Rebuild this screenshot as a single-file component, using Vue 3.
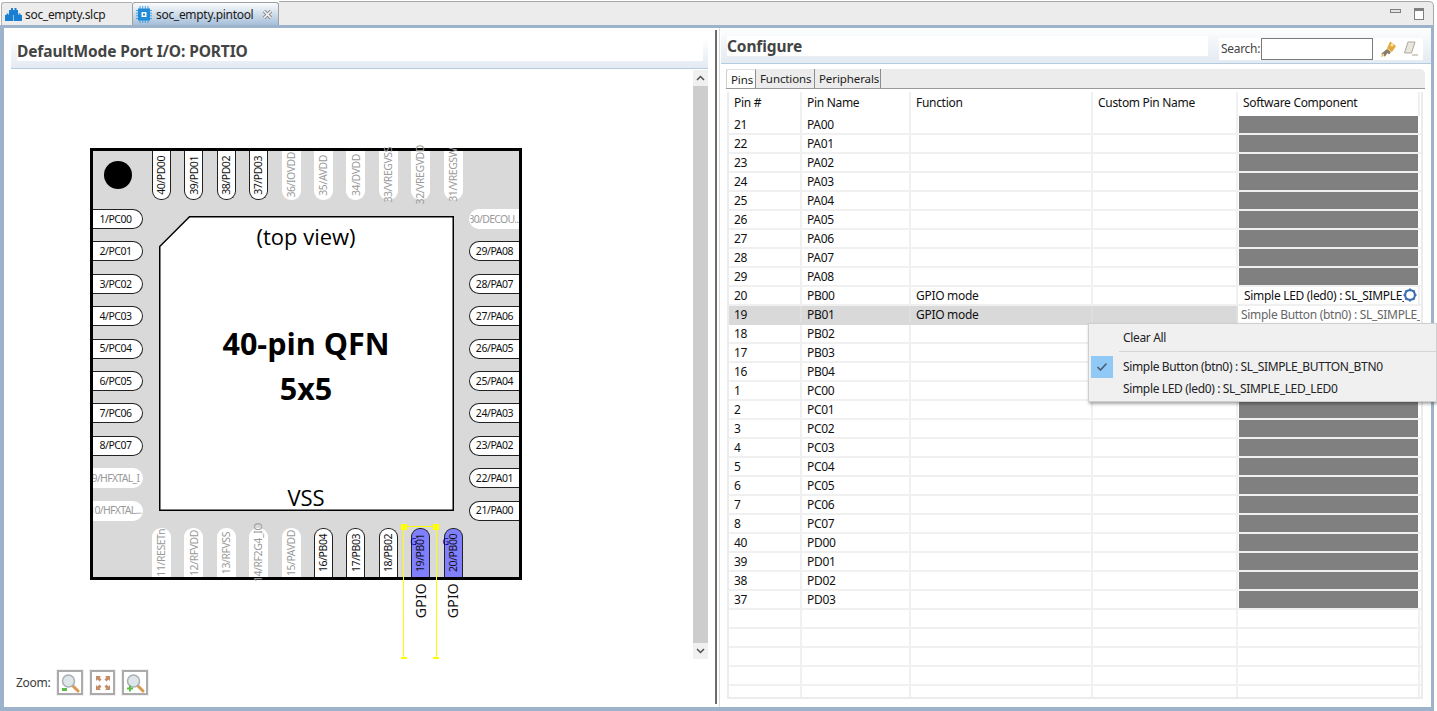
<template>
  <div class="workbench">
    <!-- editor tabs -->
    <div class="tabbar">
      <div class="tab">
        <svg class="tab-icon" width="17" height="13" viewBox="0 0 17 13">
          <path d="M4 2h9v5H4zM0 7h8.200v6H0zM8.800 7H17v6H8.800z" fill="#1a7fd0" />
          <path d="M6 0h2v2H6zM9.500 0h2v2h-2zM1.500 5.500h2V7h-2zM4.500 5.500h2V7h-2zM10.500 5.500h2V7h-2zM13.500 5.500h2V7h-2z" fill="#1a7fd0" />
        </svg>
        <span>soc_empty.slcp</span>
      </div>
      <div class="tab active">
        <svg class="tab-icon" width="16" height="17" viewBox="0 0 16 17">
          <path d="M4 0v17M6.700 0v17M9.300 0v17M12 0v17M0 4.500h16M0 7.200h16M0 9.800h16M0 12.500h16" stroke="#3fa0e6" stroke-width="1" />
          <rect x="2" y="2.500" width="12" height="12" fill="#1f8ad6" />
          <rect x="5.500" y="6" width="5" height="5" fill="#fff" />
          <rect x="7" y="7.500" width="2" height="2" fill="#1f8ad6" />
        </svg>
        <span>soc_empty.pintool</span>
        <svg class="close" width="11" height="11" viewBox="0 0 11 11">
          <path d="M2 2l7 7M9 2l-7 7" stroke="#8a8a8a" stroke-width="3.400" />
          <path d="M2 2l7 7M9 2l-7 7" stroke="#f6f6f6" stroke-width="1.600" />
        </svg>
      </div>
      <div class="tabbar-rest">
        <span class="win-min"></span>
        <span class="win-max"></span>
      </div>
    </div>

    <div class="editor">
      <!-- chip view -->
      <section class="left">
        <div class="band left-band">
          <h2>DefaultMode Port I/O: PORTIO</h2>
        </div>
        <div class="canvas-row">
          <div class="canvas">
            <div class="chip">
              <div class="pins-top">
                <span class="dot"></span>
                <div class="pin v top" v-for="p in topPins" :key="p.t" :class="{ off: p.off }"><span>{{ p.t }}</span></div>
              </div>
              <div class="chip-mid">
                <div class="pins-side">
                  <div class="pin h left-pin" v-for="p in leftPins" :key="p.t" :class="{ off: p.off }"><span>{{ p.t }}</span></div>
                </div>
                <div class="die">
                  <svg class="die-outline" width="295" height="295" viewBox="0 0 295 295">
                    <path d="M30.500 .75H294.250V294.250H.75V30.500Z" fill="#fff" stroke="#000" stroke-width="1.500" />
                  </svg>
                  <div class="die-top">(top view)</div>
                  <div class="die-name">40-pin QFN<br />5x5</div>
                  <div class="die-vss">VSS</div>
                </div>
                <div class="pins-side">
                  <div class="pin h right-pin" v-for="p in rightPins" :key="p.t" :class="{ off: p.off }"><span>{{ p.t }}</span></div>
                </div>
              </div>
              <div class="pins-bottom">
                <div class="pin v bottom" v-for="p in bottomPins" :key="p.t" :class="{ off: p.off, used: p.used }">
                  <i v-if="p.used">G</i>
                  <span>{{ p.t }}</span>
                </div>
              </div>
            </div>
            <div class="gpio-labels">
              <span>GPIO</span>
              <span>GPIO</span>
            </div>
            <svg class="marker" width="44" height="140" viewBox="0 0 44 140">
              <path d="M3 2.500H35" stroke="#ff0" stroke-width="1" fill="none" />
              <rect x="0" y="0" width="6" height="6" fill="#ff0" />
              <rect x="32" y="0" width="6" height="6" fill="#ff0" />
              <path d="M2.500 4V134M35.500 4V134" stroke="#ff0" stroke-width="1" />
              <rect x="0" y="133" width="6" height="2" fill="#ff0" />
              <rect x="32" y="133" width="6" height="2" fill="#ff0" />
            </svg>
          </div>
          <div class="scrollbar">
            <div class="sb-btn">
              <svg width="9" height="6" viewBox="0 0 9 6"><path d="M1 5l3.500-3.500L8 5" fill="none" stroke="#505050" stroke-width="1.500" /></svg>
            </div>
            <div class="sb-thumb"></div>
            <div class="sb-btn">
              <svg width="9" height="6" viewBox="0 0 9 6"><path d="M1 1l3.500 3.500L8 1" fill="none" stroke="#505050" stroke-width="1.500" /></svg>
            </div>
          </div>
        </div>
        <div class="zoom-row">
          <span>Zoom:</span>
          <button class="zoom-btn">
            <svg width="20" height="20" viewBox="0 0 20 20">
              <path d="M12 12l6 6" stroke="#d99a4e" stroke-width="3" stroke-linecap="round" />
              <circle cx="8.500" cy="8" r="6" fill="#dfe6ea" stroke="#a9b0b5" stroke-width="1.500" />
              <rect x="2" y="15" width="5" height="3" fill="#5dbb46" />
            </svg>
          </button>
          <button class="zoom-btn mid">
            <svg width="16" height="16" viewBox="0 0 16 16">
              <path d="M1 1h5L4.600 2.600 6.500 4.500 4.500 6.500 2.600 4.600 1 6zM15 1v5l-1.600-1.400-1.900 1.900-2-2 1.900-1.900L10 1zM1 15v-5l1.600 1.400 1.900-1.900 2 2-1.900 1.900L6 15zM15 15h-5l1.400-1.600-1.900-1.900 2-2 1.900 1.900L15 10z" fill="#c58a68" />
            </svg>
          </button>
          <button class="zoom-btn">
            <svg width="20" height="20" viewBox="0 0 20 20">
              <path d="M12 12l6 6" stroke="#d99a4e" stroke-width="3" stroke-linecap="round" />
              <circle cx="8.500" cy="8" r="6" fill="#dfe6ea" stroke="#a9b0b5" stroke-width="1.500" />
              <path d="M5 12.500v6M2 15.500h6" stroke="#5dbb46" stroke-width="2" />
            </svg>
          </button>
        </div>
      </section>

      <div class="sash"></div>

      <!-- configure panel -->
      <section class="right">
        <div class="band right-band">
          <h2>Configure</h2>
          <div class="search">
            <label>Search:</label>
            <input type="text" />
            <svg width="18" height="18" viewBox="0 0 18 18">
              <path d="M10 1.500l6 4.500-4 6-5-3.500z" fill="#e3a93c" />
              <circle cx="12" cy="5" r="1.500" fill="#fbe7a8" />
              <path d="M7 9l4 3-2 2.500-1.500-1.500L5 16.500 3.500 16 4 13.500 2 15l-.5-1.500z" fill="#8b7d63" />
              <path d="M2 14l-1 3 3-1z" fill="#f1c65e" />
            </svg>
            <svg width="16" height="16" viewBox="0 0 16 16">
              <path d="M5 1h7l-3.500 11H1.500z" fill="#e9e6dc" stroke="#aba89c" stroke-width="1" />
              <path d="M9 14h6" stroke="#b5b2a6" stroke-width="1.200" />
            </svg>
          </div>
        </div>
        <div class="tabs">
          <div class="subtab current">Pins</div>
          <div class="subtab">Functions</div>
          <div class="subtab">Peripherals</div>
        </div>
        <div class="table">
          <div class="row head">
            <div class="c c1">Pin #</div>
            <div class="c c2">Pin Name</div>
            <div class="c c3">Function</div>
            <div class="c c4">Custom Pin Name</div>
            <div class="c c5">Software Component</div>
            <div class="c c6"></div>
          </div>
          <div class="row" v-for="r in rows" :key="r.name" :class="{ selected: r.name === 'PB01' }">
            <div class="c c1">{{ r.num }}</div>
            <div class="c c2">{{ r.name }}</div>
            <div class="c c3">{{ r.fn }}</div>
            <div class="c c4"></div>
            <div class="c c5" :class="{ grey: !r.sw, pad: r.name === 'PB00', edit: r.name === 'PB01' }">
              <span v-if="r.sw" class="sw-text">{{ r.sw }}</span>
              <svg v-if="r.name === 'PB00'" class="gear" width="14" height="14" viewBox="0 0 14 14">
                <circle cx="7" cy="7" r="6" fill="#3f6fb5" />
                <path d="M7 .5v13M.5 7h13M2.400 2.400l9.200 9.200M11.600 2.400l-9.200 9.200" stroke="#3f6fb5" stroke-width="2" />
                <circle cx="7" cy="7" r="3.800" fill="#fff" />
              </svg>
            </div>
            <div class="c c6"></div>
          </div>
          <div class="row" v-for="n in 4" :key="n">
            <div class="c c1"></div>
            <div class="c c2"></div>
            <div class="c c3"></div>
            <div class="c c4"></div>
            <div class="c c5"></div>
            <div class="c c6"></div>
          </div>
          <div class="row last">
            <div class="c c1"></div>
            <div class="c c2"></div>
            <div class="c c3"></div>
            <div class="c c4"></div>
            <div class="c c5"></div>
            <div class="c c6"></div>
          </div>
        </div>
      </section>
    </div>

    <!-- context menu -->
    <div class="menu">
      <div class="menu-item">Clear All</div>
      <div class="menu-sep"></div>
      <div class="menu-item">
        <span class="menu-check">
          <svg width="12" height="10" viewBox="0 0 12 10"><path d="M1.500 5l3 3 6-6.500" fill="none" stroke="#4a5f73" stroke-width="1.600" /></svg>
        </span>
        Simple Button (btn0) : SL_SIMPLE_BUTTON_BTN0
      </div>
      <div class="menu-item">Simple LED (led0) : SL_SIMPLE_LED_LED0</div>
    </div>
  </div>
</template>

<script setup>
const topPins = [
  { t: "40/PD00" },
  { t: "39/PD01" },
  { t: "38/PD02" },
  { t: "37/PD03" },
  { t: "36/IOVDD", off: true },
  { t: "35/AVDD", off: true },
  { t: "34/DVDD", off: true },
  { t: "33/VREGVSS", off: true },
  { t: "32/VREGVDD", off: true },
  { t: "31/VREGSW", off: true },
];

const leftPins = [
  { t: "1/PC00" },
  { t: "2/PC01" },
  { t: "3/PC02" },
  { t: "4/PC03" },
  { t: "5/PC04" },
  { t: "6/PC05" },
  { t: "7/PC06" },
  { t: "8/PC07" },
  { t: "9/HFXTAL_I", off: true },
  { t: "10/HFXTAL...", off: true },
];

const rightPins = [
  { t: "30/DECOU...", off: true },
  { t: "29/PA08" },
  { t: "28/PA07" },
  { t: "27/PA06" },
  { t: "26/PA05" },
  { t: "25/PA04" },
  { t: "24/PA03" },
  { t: "23/PA02" },
  { t: "22/PA01" },
  { t: "21/PA00" },
];

const bottomPins = [
  { t: "11/RESETn", off: true },
  { t: "12/RFVDD", off: true },
  { t: "13/RFVSS", off: true },
  { t: "14/RF2G4_IO", off: true },
  { t: "15/PAVDD", off: true },
  { t: "16/PB04" },
  { t: "17/PB03" },
  { t: "18/PB02" },
  { t: "19/PB01", used: true },
  { t: "20/PB00", used: true },
];

const pinList = [
  [21, "PA00"], [22, "PA01"], [23, "PA02"], [24, "PA03"], [25, "PA04"], [26, "PA05"], [27, "PA06"],
  [28, "PA07"], [29, "PA08"], [20, "PB00"], [19, "PB01"], [18, "PB02"], [17, "PB03"], [16, "PB04"],
  [1, "PC00"], [2, "PC01"], [3, "PC02"], [4, "PC03"], [5, "PC04"], [6, "PC05"], [7, "PC06"], [8, "PC07"],
  [40, "PD00"], [39, "PD01"], [38, "PD02"], [37, "PD03"],
];

const rows = pinList.map(([num, name]) => {
  if (name === "PB00") return { num, name, fn: "GPIO mode", sw: "Simple LED (led0) : SL_SIMPLE_LED_LED0" };
  if (name === "PB01") return { num, name, fn: "GPIO mode", sw: "Simple Button (btn0) : SL_SIMPLE_BUTTON_BTN0" };
  return { num, name, fn: "", sw: "" };
});
</script>

<style>
html,
body {
  margin: 0;
  background: #fff;
  overflow: hidden;
}
</style>

<style scoped>
.workbench {
  position: relative;
  width: 1437px;
  height: 711px;
  overflow: hidden;
  display: flex;
  flex-direction: column;
  font-family: "Noto Sans", "Open Sans", sans-serif;
  font-size: 12px;
  letter-spacing: -0.3px;
  color: #1a1a1a;
  background: #fff;
}

/* tab bar */
.tabbar {
  display: flex;
  height: 25px;
  flex: none;
  padding-top: 2px;
  box-sizing: border-box;
  padding-left: 1px;
}
.tab {
  display: flex;
  align-items: center;
  width: 131px;
  box-sizing: border-box;
  padding-left: 3px;
  gap: 3px;
  background: #ececec;
  border: 1px solid #b0b0b0;
  border-bottom: 0;
  border-right: 0;
  border-radius: 3px 0 0 0;
}
.tab.active {
  width: 147px;
  padding-left: 3px;
  gap: 4px;
  background: linear-gradient(#fbfcfd, #a6bfd9);
  border: 1px solid #a0a0a0;
  border-bottom: 0;
  border-radius: 3px 3px 0 0;
}
.tab-icon {
  flex: none;
}
.close {
  margin-left: 5px;
}
.tabbar-rest {
  flex: 1;
  margin-right: 3px;
  margin-top: -1px;
  background: #ececec;
  border-top: 1px solid #a8a8a8;
  border-right: 1px solid #a8a8a8;
  border-radius: 0 5px 0 0;
  display: flex;
  justify-content: flex-end;
  gap: 13px;
  padding: 6px 9px 0 0;
  box-sizing: border-box;
}
.win-min {
  width: 9px;
  height: 2px;
  border: 1px solid #7f7f7f;
  background: #dfe4e8;
  box-sizing: content-box;
  margin-top: 1px;
}
.win-max {
  width: 8px;
  height: 8px;
  border: 1px solid #7f7f7f;
  border-top-width: 3px;
  background: #fff;
  margin-top: 0;
}

/* frame */
.editor {
  flex: 1;
  min-height: 0;
  display: flex;
  margin-right: 3px;
  border: 3px solid #9db3cc;
  border-left-width: 4px;
  border-bottom-width: 4px;
  background: #fff;
}

/* left pane */
.left {
  width: 707px;
  flex: none;
  display: flex;
  flex-direction: column;
}
.band {
  flex: none;
  box-sizing: border-box;
  background: linear-gradient(#fdfefe, #e3eaf2);
  border-bottom: 1px solid #b5cce0;
}
.band h2 {
  margin: 0;
  font-weight: 700;
  font-size: 15.500px;
  letter-spacing: -0.12px;
  line-height: 20px;
  color: #444;
  background: #fff;
}
.left-band {
  height: 29px;
  margin: 12px 3px 0 7px;
  padding: 0 5px 0 6px;
}
.left-band h2 {
  height: 21px;
  line-height: 23px;
}
.canvas-row {
  height: 589px;
  flex: none;
  display: flex;
  margin-top: 1px;
}
.canvas {
  position: relative;
  width: 689px;
  flex: none;
}
.chip {
  position: absolute;
  left: 86px;
  top: 78px;
  width: 432px;
  height: 432px;
  box-sizing: border-box;
  border: 3px solid #000;
  background: #d9d9d9;
  display: flex;
  flex-direction: column;
}
.pins-top,
.pins-bottom {
  display: flex;
  gap: 13.400px;
  padding-left: 59px;
  height: 49px;
  flex: none;
  position: relative;
}
.pins-bottom {
  margin-top: 16px;
}
.dot {
  position: absolute;
  left: 11px;
  top: 10px;
  width: 28px;
  height: 28px;
  border-radius: 50%;
  background: #000;
}
.pin {
  box-sizing: border-box;
  background: #fff;
  border: 1px solid #222;
  display: flex;
  align-items: center;
  justify-content: center;
  font-size: 10.500px;
  letter-spacing: -0.45px;
  line-height: 1;
  white-space: nowrap;
  color: #111;
  position: relative;
}
.pin.off {
  border-color: #fff;
  color: #9a9a9a;
}
.pin.v {
  width: 19px;
  height: 49px;
}
.pin.v span {
  writing-mode: vertical-rl;
  transform: rotate(180deg);
}
.pin.top {
  border-top: 0;
  border-radius: 0 0 9px 9px;
}
.pin.bottom {
  border-bottom: 0;
  border-radius: 9px 9px 0 0;
}
.pin.used {
  background: #7f7fff;
}
.pin.used i {
  position: absolute;
  left: -2px;
  top: 8px;
  font-style: normal;
  font-size: 9px;
  color: #00009a;
}
.chip-mid {
  flex: 1;
  min-height: 0;
  display: flex;
  justify-content: space-between;
}
.pins-side {
  display: flex;
  flex-direction: column;
  gap: 12.400px;
  width: 50px;
  padding-top: 9px;
  box-sizing: border-box;
}
.pin.h {
  width: 50px;
  height: 20px;
  flex: none;
  overflow: hidden;
}
.pin.h span {
  flex: none;
}
.pin.h.off {
  letter-spacing: -0.7px;
}
.left-pin {
  border-left: 0;
  border-radius: 0 10px 10px 0;
  padding-right: 4px;
}
.right-pin {
  border-right: 0;
  border-radius: 10px 0 0 10px;
}
.die {
  position: relative;
  width: 295px;
  height: 295px;
  flex: none;
  margin-top: 16px;
  display: flex;
  flex-direction: column;
  align-items: center;
}
.die-outline {
  position: absolute;
  left: 0;
  top: 0;
}
.die-top,
.die-name,
.die-vss {
  position: relative;
  color: #000;
  letter-spacing: 0;
  font-family: "Open Sans", "Noto Sans", sans-serif;
}
.die-top {
  font-size: 22px;
  line-height: 28px;
  margin-top: 6px;
}
.die-name {
  font-size: 30.500px;
  font-weight: 700;
  line-height: 45px;
  margin-top: 71px;
  text-align: center;
}
.die-vss {
  font-size: 22px;
  line-height: 28px;
  margin-top: auto;
}
.gpio-labels {
  position: absolute;
  left: 407px;
  top: 513px;
  display: flex;
  gap: 12px;
  font-size: 14px;
  letter-spacing: 0.2px;
  line-height: 20px;
  color: #111;
}
.gpio-labels span {
  writing-mode: vertical-rl;
  transform: rotate(180deg);
}
.marker {
  position: absolute;
  left: 397px;
  top: 454px;
}

.scrollbar {
  width: 15px;
  flex: none;
  display: flex;
  flex-direction: column;
  background: #f0f0f0;
}
.sb-btn {
  height: 16px;
  flex: none;
  display: flex;
  align-items: center;
  justify-content: center;
}
.sb-thumb {
  flex: 1;
  background: #cdcdcd;
}

.zoom-row {
  flex: 1;
  display: flex;
  align-items: flex-start;
  padding: 0 0 0 12px;
  margin-top: 11px;
  color: #3a3a3a;
}
.zoom-row span {
  margin-right: 7px;
  line-height: 25px;
}
.zoom-btn {
  width: 26px;
  height: 25px;
  padding: 0;
  margin-right: 7px;
  box-sizing: border-box;
  display: flex;
  align-items: center;
  justify-content: center;
  background: #fff;
  border: 2px solid #ababab;
  outline: 1px solid #f0f0f0;
}
.zoom-btn.mid {
  width: 25px;
}

.sash {
  width: 2px;
  flex: none;
  margin: 2px 0 3px 4px;
  background: #6d6d6d;
}

/* right pane */
.right {
  flex: 1;
  min-width: 0;
  display: flex;
  flex-direction: column;
  padding-left: 4px;
  box-shadow: inset 2px 0 0 #fff, inset 3px 0 0 #dcdcdc;
}
.right-band {
  height: 36px;
  flex: none;
  padding: 8px 8px 0 6px;
  display: flex;
  justify-content: space-between;
  align-items: flex-start;
}
.right-band h2 {
  width: 481px;
  height: 20px;
}
.search {
  display: flex;
  align-items: center;
  gap: 2px;
  height: 22px;
  margin-top: 2px;
  width: 204px;
  padding-left: 2px;
  box-sizing: border-box;
  background: #fff;
  color: #444;
}
.search label {
  margin-top: -2px;
  margin-right: -1px;
}
.search input {
  width: 112px;
  height: 22px;
  box-sizing: border-box;
  border: 1px solid #7a7a7a;
  margin: 0 5px 0 0;
  padding: 0;
  background: #fff;
}
.search svg + svg {
  margin-left: 3px;
}

.tabs {
  flex: none;
  display: flex;
  height: 20px;
  margin: 5px 6px 0 5px;
  box-sizing: border-box;
  background: #ececec;
  border-bottom: 1px solid #9a9a9a;
  border-radius: 0 5px 0 0;
}
.subtab {
  padding: 0 4px;
  line-height: 19px;
  border-right: 1px solid #8d8d8d;
  letter-spacing: -0.1px;
  font-size: 11.500px;
  color: #222;
  box-sizing: border-box;
  width: 59px;
}
.subtab:last-child {
  width: 66px;
}
.subtab.current {
  width: 30px;
  background: #fff;
  padding: 0 0 0 4px;
  border-radius: 3px 0 0 0;
  border-left: 1px solid #cfcfcf;
  border-top: 1px solid #e0e0e0;
}

.table {
  flex: 1;
  min-height: 0;
  margin: 3px 8px 8px 6px;
  border: 2px solid #ececec;
  border-top: 0;
  overflow: hidden;
}
.row {
  display: flex;
  height: 19px;
  line-height: 18px;
  box-sizing: border-box;
  border-bottom: 2px solid #f0f0f0;
}
.row.head {
  height: 24px;
  line-height: 22px;
  border-bottom: 0;
}
.row.last {
  border-bottom: 0;
  height: 14px;
}
.c {
  flex: none;
  box-sizing: border-box;
  border-right: 2px solid #f0f0f0;
  padding-left: 5px;
  white-space: nowrap;
  overflow: hidden;
  color: #111;
}
.c1 {
  width: 73px;
}
.c2 {
  width: 109px;
}
.c3 {
  width: 182px;
}
.c4 {
  width: 145px;
}
.c5 {
  width: 182px;
}
.c6 {
  flex: 1;
  border-right: 0;
}
.head .c {
  line-height: 22px;
}
.grey {
  background: #808080;
  border-right: 2px solid #fff;
  box-shadow: inset 1px 0 0 #fff;
}
.row.selected {
  background: #d9d9d9;
  border-bottom-color: #d9d9d9;
}
.row.selected .c {
  border-right-color: #dedede;
}
.row.selected .c6 {
  background: #fff;
}
.edit {
  background: #fff;
  color: #666;
  padding-left: 3px;
  overflow: hidden;
  border-right: 0;
}
.edit .sw-text {
  color: #666;
}
.pad {
  position: relative;
  padding-left: 6px;
}
.pad .sw-text {
  display: inline-block;
  width: 160px;
  overflow: hidden;
}
.gear {
  position: absolute;
  right: 1px;
  top: 1px;
}
.sw-text {
  color: #111;
}

/* popup */
.menu {
  position: absolute;
  left: 1088px;
  top: 323px;
  width: 349px;
  height: 79px;
  box-sizing: border-box;
  padding: 2px 0 0 2px;
  background: #f0f0f0;
  border: 1px solid #cfcfcf;
  box-shadow: 1px 2px 3px rgba(0, 0, 0, 0.35);
  color: #222;
  letter-spacing: -0.35px;
}
.menu-item {
  position: relative;
  height: 22px;
  line-height: 22px;
  padding-left: 32px;
}
.menu-item:first-child {
  height: 24px;
  line-height: 24px;
}
.menu-sep {
  height: 1px;
  margin: 1px 0 4px 28px;
  background: #d5d5d5;
}
.menu-check {
  position: absolute;
  left: 0;
  top: 0;
  width: 22px;
  height: 22px;
  background: #90c8f6;
  display: flex;
  align-items: center;
  justify-content: center;
}
</style>
